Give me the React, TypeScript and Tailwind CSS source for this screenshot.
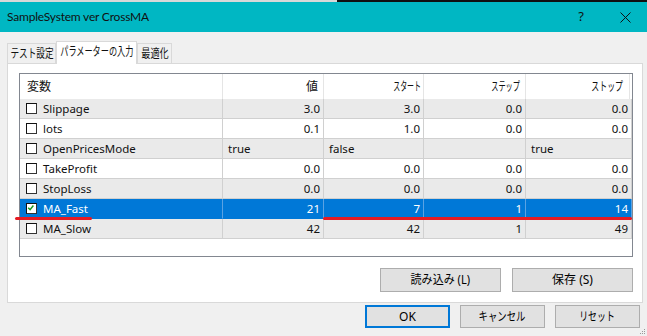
import React from "react";

const FONT = { fontFamily: '"Noto Sans", "Noto Sans CJK JP", sans-serif' };

type Row = { name: string; v: string; s: string; st: string; sp: string; sel?: boolean; checked?: boolean; leftVal?: boolean };

const rows: Row[] = [
  { name: "Slippage", v: "3.0", s: "3.0", st: "0.0", sp: "0.0" },
  { name: "lots", v: "0.1", s: "1.0", st: "0.0", sp: "0.0" },
  { name: "OpenPricesMode", v: "true", s: "false", st: "", sp: "true", leftVal: true },
  { name: "TakeProfit", v: "0.0", s: "0.0", st: "0.0", sp: "0.0" },
  { name: "StopLoss", v: "0.0", s: "0.0", st: "0.0", sp: "0.0" },
  { name: "MA_Fast", v: "21", s: "7", st: "1", sp: "14", sel: true, checked: true },
  { name: "MA_Slow", v: "42", s: "42", st: "1", sp: "49" },
];

function Check({ checked }: { checked?: boolean }) {
  return (
    <div className="w-[11px] h-[11px] bg-white border border-[#333] border-t-[#111] border-l-[#111] relative shrink-0">
      {checked && (
        <svg viewBox="0 0 11 11" className="absolute left-0 top-0 w-[9px] h-[9px]">
          <path d="M1.5 4.5 L3.8 7 L7.8 1.8" stroke="#1a9a1a" strokeWidth="1.8" fill="none" />
        </svg>
      )}
    </div>
  );
}

function Btn({ children, primary, w }: { children: React.ReactNode; primary?: boolean; w: string }) {
  return (
    <div
      className={`${w} flex items-center justify-center bg-[#e1e1e1] text-[12px] text-black whitespace-nowrap ${
        primary ? "border-2 border-[#0078d7]" : "border border-[#adadad]"
      }`}
    >
      {children}
    </div>
  );
}

export default function App() {
  return (
    <div className="w-[647px] h-[336px] bg-[#f0f0f0] relative overflow-hidden text-black" style={FONT}>
      {/* top strip */}
      <div className="h-[2px] flex">
        <div className="w-[337px] bg-[#d8d8d8]" />
        <div className="flex-1 bg-[#101010]" />
      </div>
      {/* title bar */}
      <div className="h-[30px] bg-[#00b7c3] flex items-center">
        <div className="pl-[7px] text-[12px] text-[#111] tracking-[-0.2px]" style={{ fontFamily: 'Lato, "Noto Sans", sans-serif' }}>
          SampleSystem ver CrossMA
        </div>
        <div className="flex-1" />
        <div className="text-[13px] text-[#111] mr-[36px]">?</div>
        <svg width="11" height="11" viewBox="0 0 11 11" className="mr-[16px]">
          <path d="M0.5 0.5 L10.5 10.5 M10.5 0.5 L0.5 10.5" stroke="#111" strokeWidth="1" />
        </svg>
      </div>

      {/* tabs */}
      <div className="pl-[7px] pt-[8px] flex items-end h-[31px] relative z-10 text-[12px] whitespace-nowrap text-[#111]">
        <div className="w-[49px] h-[20px] border border-[#d9d9d9] border-b-0 bg-[#f0f0f0] flex items-center justify-center">
          <span className="inline-block scale-x-[0.72]">テスト設定</span>
        </div>
        <div className="w-[81px] h-[23px] border border-[#d9d9d9] border-b-0 bg-white flex items-center justify-center mb-[-1px] pb-[2px]">
          <span className="inline-block scale-x-[0.68]">パラメーターの入力</span>
        </div>
        <div className="w-[35px] h-[20px] border border-[#d9d9d9] border-b-0 bg-[#f0f0f0] flex items-center justify-center">
          <span className="inline-block scale-x-[0.76]">最適化</span>
        </div>
      </div>

      {/* panel */}
      <div className="ml-[7px] w-[636px] h-[240px] bg-white border border-[#d9d9d9] pt-[9px] pl-[11px] pr-[9px]">
        <div className="w-[614px] h-[184px] border border-[#828790] bg-white">
          {/* header */}
          <div className="flex h-[25px] text-[12px] text-[#111] whitespace-nowrap">
            <div className="w-[203px] border-r border-[#e5e5e5] flex items-center pl-[7px]">変数</div>
            <div className="w-[101px] border-r border-[#e5e5e5] flex items-center justify-end pr-[5px]">値</div>
            <div className="w-[100px] border-r border-[#e5e5e5] flex items-center justify-end pr-[2px]">
              <span className="inline-block origin-right scale-x-[0.58]">スタート</span>
            </div>
            <div className="w-[102px] border-r border-[#e5e5e5] flex items-center justify-end pr-[5px]">
              <span className="inline-block origin-right scale-x-[0.6]">ステップ</span>
            </div>
            <div className="w-[104px] border-r border-[#e5e5e5] flex items-center justify-end pr-[6px]">
              <span className="inline-block origin-right scale-x-[0.66]">ストップ</span>
            </div>
          </div>
          {rows.map((r, i) => {
            const bg = r.sel ? "bg-[#0078d7] text-white" : i % 2 === 0 ? "bg-[#eaeaea] text-[#111]" : "bg-white text-[#111]";
            const line = r.sel ? "border-[#0078d7]" : "border-[#d0d0d0]";
            const cell = `border-r border-b ${r.sel ? "border-r-[#5aa2e3] border-b-[#0078d7]" : line} flex items-center`;
            const num = r.leftVal ? "justify-start pl-[5px]" : "justify-end pr-[3px]";
            return (
              <div key={r.name} className={`flex h-[20px] text-[11.5px] ${bg}`}>
                <div className={`w-[203px] ${cell} pl-[6px] gap-[6px]`}>
                  <Check checked={r.checked} />
                  <span>{r.name}</span>
                </div>
                <div className={`w-[101px] ${cell} ${num}`}>{r.v}</div>
                <div className={`w-[100px] ${cell} ${num}`}>{r.s}</div>
                <div className={`w-[102px] ${cell} ${num}`}>{r.st}</div>
                <div className={`flex-1 ${cell} ${num}`}>{r.sp}</div>
              </div>
            );
          })}
        </div>
        <div className="flex justify-end gap-[11px] mt-[11px]">
          <Btn w="w-[121px] h-[24px]">
            <span className="inline-block scale-x-[0.92]">読み込み (L)</span>
          </Btn>
          <Btn w="w-[121px] h-[24px]">保存 (S)</Btn>
        </div>
      </div>

      {/* bottom buttons */}
      <div className="flex mt-[2px] pl-[365px] gap-[10px]">
        <Btn primary w="w-[85px] h-[23px]">OK</Btn>
        <Btn w="w-[85px] h-[23px]">
          <span className="inline-block scale-x-[0.78]">キャンセル</span>
        </Btn>
        <Btn w="w-[85px] h-[23px]">
          <span className="inline-block scale-x-[0.74]">リセット</span>
        </Btn>
      </div>

      {/* resize grip */}
      <svg width="6" height="6" viewBox="0 0 6 6" className="absolute right-[1px] bottom-[1px]">
        <rect x="4" y="0" width="1" height="1" fill="#999" />
        <rect x="2" y="2" width="1" height="1" fill="#999" />
        <rect x="4" y="2" width="1" height="1" fill="#999" />
        <rect x="0" y="4" width="1" height="1" fill="#999" />
        <rect x="2" y="4" width="1" height="1" fill="#999" />
        <rect x="4" y="4" width="1" height="1" fill="#999" />
      </svg>

      {/* red annotation lines */}
      <div className="absolute left-[15px] top-[217px] w-[77px] h-[3px] bg-[#e61b23] rounded-full" />
      <div className="absolute left-[323px] top-[217px] w-[309px] h-[3px] bg-[#e61b23] rounded-full" />
    </div>
  );
}
